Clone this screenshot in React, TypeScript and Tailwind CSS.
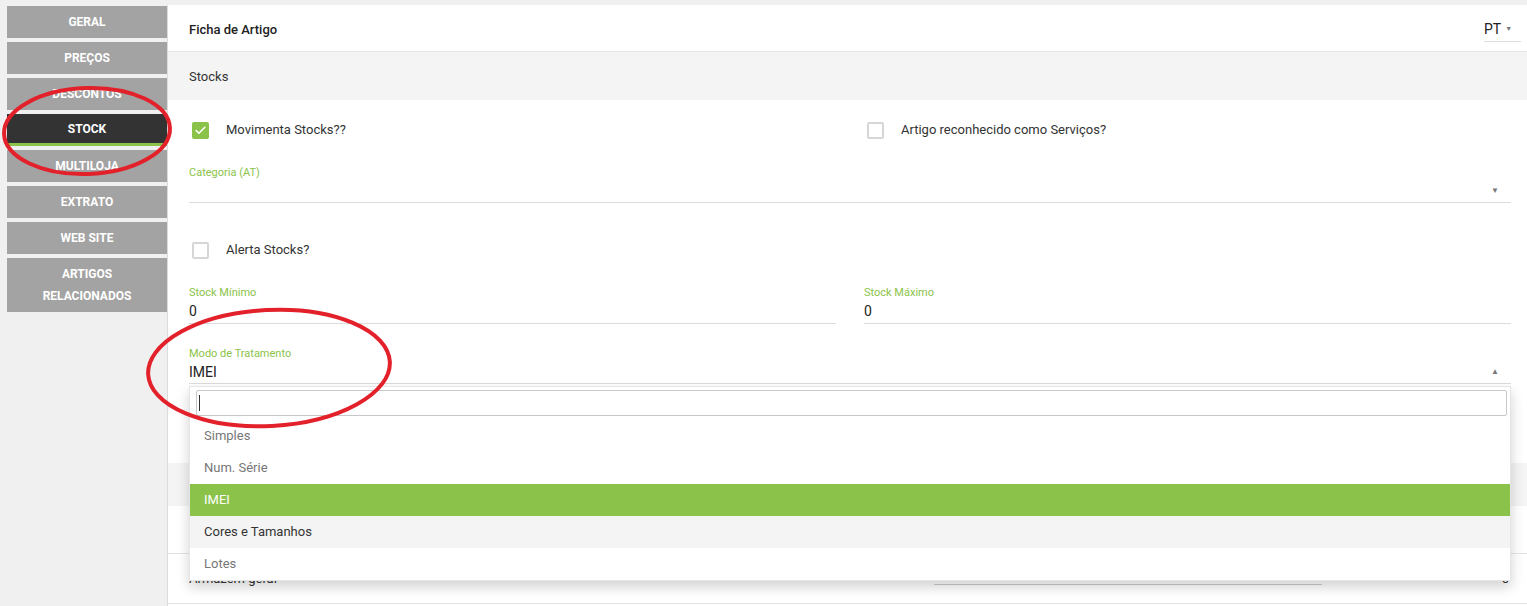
import { Check } from "lucide-react";

const tabs = ["GERAL", "PREÇOS", "DESCONTOS", "STOCK", "MULTILOJA", "EXTRATO", "WEB SITE"];

function Box({ checked }: { checked?: boolean }) {
  return checked ? (
    <span className="w-[17px] h-[17px] rounded-[2px] bg-[#8bc34a] flex items-center justify-center">
      <Check size={13} strokeWidth={3} className="text-white" />
    </span>
  ) : (
    <span className="w-[17px] h-[17px] rounded-[2px] border-2 border-[#d6d6d6] bg-white" />
  );
}

function Field({ label, value, caret, tall }: { label: string; value?: string; caret?: "down" | "up"; tall?: boolean }) {
  return (
    <div>
      <div className="text-[11px] leading-[14px] text-[#8bc34a]">{label}</div>
      <div
        className={`${tall ? "h-[24px]" : "h-[23px]"} border-b border-[#dcdcdc] flex items-center justify-between text-[14px] text-[#222]`}
      >
        <span>{value}</span>
        {caret && (
          <span className="mr-[12px] text-[8px] text-[#777]">{caret === "down" ? "▼" : "▲"}</span>
        )}
      </div>
    </div>
  );
}

export default function App() {
  const options = [
    { label: "Simples", cls: "text-[#777]" },
    { label: "Num. Série", cls: "text-[#777]" },
    { label: "IMEI", cls: "bg-[#8bc34a] text-white" },
    { label: "Cores e Tamanhos", cls: "bg-[#f4f4f4] text-[#333]" },
    { label: "Lotes", cls: "text-[#777]" },
  ];

  return (
    <div className="relative h-[606px] w-[1527px] overflow-hidden bg-[#f0f0f0] flex pt-[5px] font-['Roboto',sans-serif]">
      {/* Sidebar */}
      <div className="w-[160px] ml-[7px] mt-[1px] flex flex-col gap-[4px] shrink-0">
        {tabs.map((t) => (
          <div
            key={t}
            className={`h-[32px] flex items-center justify-center text-[12px] font-bold text-white ${
              t === "STOCK" ? "bg-[#333] border-b-[3px] border-[#8bc34a]" : "bg-[#a3a3a3]"
            }`}
          >
            {t}
          </div>
        ))}
        <div className="h-[54px] flex flex-col items-center justify-center text-[12px] leading-[22px] font-bold text-white bg-[#a3a3a3]">
          <span>ARTIGOS</span>
          <span>RELACIONADOS</span>
        </div>
      </div>

      {/* Main */}
      <div className="flex-1 bg-white border-l border-[#dcdcdc] flex flex-col">
        <div className="h-[47px] border-b border-[#e6e6e6] flex items-center justify-between pl-[21px] pr-[6px] pt-[3px] shrink-0">
          <span className="text-[13px] font-medium text-[#222]">Ficha de Artigo</span>
          <span className="flex items-center gap-[4px] border-b border-[#ddd] w-[37px] h-[24px] text-[14px] text-[#222]">
            PT <span className="text-[7px] text-[#777]">▼</span>
          </span>
        </div>
        <div className="h-[48px] bg-[#f4f4f4] flex items-center pl-[21px] pt-[2px] text-[13px] text-[#333] shrink-0">Stocks</div>

        <div className="relative pl-[21px] pr-[16px]">
          <div className="grid grid-cols-2 gap-x-[28px] mt-[20px]">
            <div className="flex items-center h-[20px] pl-[3px] gap-[17px] text-[13px] text-[#333]">
              <Box checked />
              Movimenta Stocks??
            </div>
            <div className="flex items-center h-[20px] pl-[3px] gap-[17px] text-[13px] text-[#333]">
              <Box />
              Artigo reconhecido como Serviços?
            </div>
          </div>

          <div className="mt-[26px]">
            <Field label="Categoria (AT)" caret="down" />
          </div>

          <div className="flex items-center h-[20px] pl-[3px] gap-[17px] text-[13px] text-[#333] mt-[37px]">
            <Box />
            Alerta Stocks?
          </div>

          <div className="grid grid-cols-2 gap-x-[28px] mt-[26px]">
            <Field label="Stock Mínimo" value="0" tall />
            <Field label="Stock Máximo" value="0" tall />
          </div>

          <div className="mt-[23px] relative">
            <Field label="Modo de Tratamento" value="IMEI" caret="up" />

            {/* Dropdown */}
            <div className="absolute left-0 right-0 top-[39px] z-10 bg-white shadow-[0_6px_12px_rgba(0,0,0,0.18)] border border-[#e5e5e5] pt-[3px]">
              <div className="ml-[6px] mr-[3px] h-[26px] border border-[#c8c8c8] rounded-[2px] flex items-center pl-[2px]">
                <span className="w-px h-[16px] bg-[#333]" />
              </div>
              <div className="mt-[4px]">
                {options.map((o) => (
                  <div key={o.label} className={`h-[32px] flex items-center pl-[14px] text-[13px] ${o.cls}`}>
                    {o.label}
                  </div>
                ))}
              </div>
            </div>
          </div>
        </div>

        {/* Content behind the dropdown */}
        <div className="mt-[79px] h-[43px] bg-[#f4f4f4] shrink-0" />
        <div className="h-[48px] border-b border-[#e3e3e3] shrink-0" />
        <div className="h-[50px] border-b border-[#e3e3e3] flex items-center justify-between pl-[21px] pr-[18px] text-[13px] text-[#333] shrink-0">
          <span>Armazem geral</span>
          <div className="flex items-center gap-[180px]">
            <span className="w-[388px] h-[12px] border-b border-[#ccc]" />
            <span>0</span>
          </div>
        </div>
      </div>

      {/* Annotation ellipses */}
      <svg className="absolute inset-0 pointer-events-none z-20" width="1527" height="606">
        <ellipse cx="87" cy="131" rx="83" ry="43" fill="none" stroke="#e3212b" strokeWidth="4" transform="rotate(-2 87 131)" />
        <ellipse cx="269" cy="368" rx="121" ry="58" fill="none" stroke="#e3212b" strokeWidth="4" transform="rotate(-3 269 368)" />
      </svg>
    </div>
  );
}
